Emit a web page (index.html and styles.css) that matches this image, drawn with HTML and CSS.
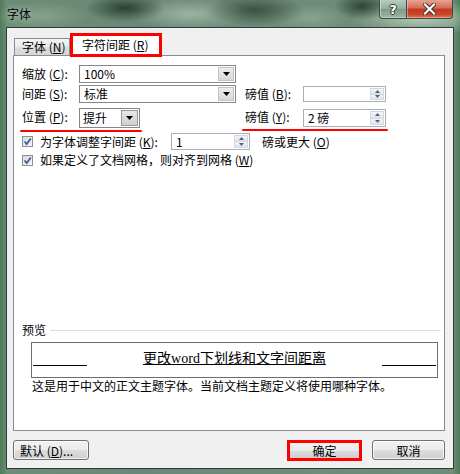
FILE: index.html
```html
<!DOCTYPE html>
<html lang="zh-CN">
<head>
<meta charset="utf-8">
<title>字体</title>
<link rel="stylesheet" href="styles.css">
</head>
<body>
<div class="window">
  <div class="titlebar">
    <span class="title">字体</span>
    <div class="caption">
      <div class="cbtn help"><span class="qmark">?</span></div>
      <div class="cbtn close">
        <svg width="13" height="12" viewBox="0 0 13 12">
          <path d="M2 1.5 L11 10.5 M11 1.5 L2 10.5" stroke="#3a2a26" stroke-width="4" stroke-linecap="square" fill="none"/>
          <path d="M2 1.5 L11 10.5 M11 1.5 L2 10.5" stroke="#ffffff" stroke-width="2.2" stroke-linecap="square" fill="none"/>
        </svg>
      </div>
    </div>
  </div>
  <div class="client">
    <div class="tabs">
      <div class="tab">字体 (<u>N</u>)</div>
      <div class="tab active">字符间距 (<u>R</u>)</div>
    </div>
    <div class="panel">
      <div class="form">
        <div class="lbl">缩放 (<u>C</u>):</div>
        <div class="combo"><span class="val">100%</span><span class="drop"><svg width="7" height="4" viewBox="0 0 7 4"><path d="M0 0H7L3.5 4Z" fill="#000"/></svg></span></div>
        <div></div><div></div><div></div>

        <div class="lbl">间距 (<u>S</u>):</div>
        <div class="combo"><span class="val">标准</span><span class="drop"><svg width="7" height="4" viewBox="0 0 7 4"><path d="M0 0H7L3.5 4Z" fill="#000"/></svg></span></div>
        <div></div>
        <div class="lbl">磅值 (<u>B</u>):</div>
        <div class="spin short"><span class="val"></span><span class="arrows"><span class="up"><svg width="5" height="3" viewBox="0 0 5 3"><path d="M0 3H5L2.5 0Z" fill="#4d6386"/></svg></span><span class="dn"><svg width="5" height="3" viewBox="0 0 5 3"><path d="M0 0H5L2.5 3Z" fill="#4d6386"/></svg></span></span></div>

        <div class="lbl">位置 (<u>P</u>):</div>
        <div class="combo pos"><span class="val">提升</span><span class="drop big"><svg width="7" height="4" viewBox="0 0 7 4"><path d="M0 0H7L3.5 4Z" fill="#000"/></svg></span></div>
        <div></div>
        <div class="lbl">磅值 (<u>Y</u>):</div>
        <div class="spin"><span class="val">2 磅</span><span class="arrows"><span class="up"><svg width="5" height="3" viewBox="0 0 5 3"><path d="M0 3H5L2.5 0Z" fill="#4d6386"/></svg></span><span class="dn"><svg width="5" height="3" viewBox="0 0 5 3"><path d="M0 0H5L2.5 3Z" fill="#4d6386"/></svg></span></span></div>

        <span class="mark mark-left"></span>
        <span class="mark mark-right"></span>
      </div>

      <div class="check-row kern">
        <span class="cb"><svg width="9" height="9" viewBox="0 0 9 9"><path d="M1.5 4.5 L3.7 7 L7.8 1.5" stroke="#3f5d9c" stroke-width="1.8" fill="none"/></svg></span>
        <span class="cb-text kern-text">为字体调整字间距 (<u>K</u>):</span>
        <div class="spin kern-spin"><span class="val">1</span><span class="arrows"><span class="up"><svg width="5" height="3" viewBox="0 0 5 3"><path d="M0 3H5L2.5 0Z" fill="#4d6386"/></svg></span><span class="dn"><svg width="5" height="3" viewBox="0 0 5 3"><path d="M0 0H5L2.5 3Z" fill="#4d6386"/></svg></span></span></div>
        <span class="after">磅或更大 (<u>O</u>)</span>
      </div>

      <div class="check-row grid-row">
        <span class="cb"><svg width="9" height="9" viewBox="0 0 9 9"><path d="M1.5 4.5 L3.7 7 L7.8 1.5" stroke="#3f5d9c" stroke-width="1.8" fill="none"/></svg></span>
        <span class="cb-text">如果定义了文档网格，则对齐到网格 (<u>W</u>)</span>
      </div>

      <div class="preview">
        <div class="pv-head"><span>预览</span><span class="pv-line"></span></div>
        <div class="pv-box">
          <span class="pv-rule"></span>
          <span class="pv-text">更改<span class="latin">word</span>下划线和文字间距离</span>
          <span class="pv-rule"></span>
        </div>
        <div class="pv-desc">这是用于中文的正文主题字体。当前文档主题定义将使用哪种字体。</div>
      </div>
    </div>
    <div class="buttons">
      <div class="btn default">默认 (<u>D</u>)...</div>
      <div class="btn-group">
        <div class="btn ok">确定</div>
        <div class="btn cancel">取消</div>
      </div>
    </div>
  </div>
</div>
</body>
</html>
```

FILE: styles.css
```css
* { box-sizing: border-box; }
html, body { margin: 0; padding: 0; }
body {
  width: 460px;
  height: 474px;
  overflow: hidden;
  font-family: "Noto Sans CJK SC", "Noto Sans", sans-serif;
  font-size: 12px;
  color: #000;
}
u { text-decoration: underline; text-underline-offset: 1px; }

.window {
  width: 460px;
  height: 474px;
  display: flex;
  flex-direction: column;
  padding: 0 6px 5px 6px;
  background:
    radial-gradient(ellipse 40px 14px at 125px 8px, rgba(28,52,40,.85), rgba(28,52,40,0)),
    radial-gradient(ellipse 50px 16px at 255px 10px, rgba(35,60,45,.7), rgba(35,60,45,0)),
    radial-gradient(ellipse 28px 14px at 362px 6px, rgba(30,50,40,.8), rgba(30,50,40,0)),
    radial-gradient(ellipse 60px 16px at 190px 14px, rgba(170,195,178,.75), rgba(170,195,178,0)),
    radial-gradient(ellipse 70px 18px at 420px 18px, rgba(195,212,198,.85), rgba(195,212,198,0)),
    radial-gradient(ellipse 50px 14px at 40px 16px, rgba(150,175,160,.6), rgba(150,175,160,0)),
    radial-gradient(ellipse 40px 14px at 310px 18px, rgba(150,178,160,.6), rgba(150,178,160,0)),
    linear-gradient(90deg, #4d7a58 0px, #6b8e75 7px, #6c8777 30%, #6f8b79 70%, #6b8e75 453px, #4d7a58 460px);
}

.titlebar {
  height: 27px;
  display: flex;
  justify-content: space-between;
  align-items: flex-start;
  padding: 0 1px;
}
.title {
  line-height: 27px;
  text-shadow: 0 0 5px rgba(255,255,255,.55);
}
.caption { display: flex; }
.cbtn {
  height: 19px;
  display: flex;
  align-items: center;
  justify-content: center;
  border: 1px solid #3b4a42;
  border-top: none;
}
.help {
  width: 27px;
  border-right: none;
  border-bottom-left-radius: 4px;
  background: linear-gradient(#b9cbbf, #93ad9c 50%, #7d9988 51%, #9fb8a6);
  box-shadow: inset 1px 0 rgba(255,255,255,.45), inset 0 -1px rgba(255,255,255,.35);
}
.qmark {
  color: #fff;
  font-family: "DejaVu Sans", sans-serif;
  font-weight: bold;
  font-size: 13px;
  line-height: 13px;
  text-shadow: 0 0 1px #2d3a33, 1px 0 0 #2d3a33, -1px 0 0 #2d3a33, 0 1px 0 #2d3a33, 0 -1px 0 #2d3a33;
}
.close {
  width: 47px;
  border-bottom-right-radius: 4px;
  background: linear-gradient(#e8a493, #d26a55 45%, #c2391f 50%, #c9472b 80%, #de7a57);
  box-shadow: inset 1px 0 rgba(255,255,255,.35), inset 0 -1px rgba(255,255,255,.3);
}

.client {
  flex: 1;
  border: 1px solid #2f3d36;
  background: #f0f0f0;
  display: flex;
  flex-direction: column;
  padding-top: 5px;
}

.tabs {
  height: 22px;
  display: flex;
  align-items: flex-end;
  padding-left: 7px;
}
.tab {
  height: 17px;
  width: 56px;
  border: 1px solid #898c95;
  border-bottom: none;
  background: linear-gradient(#f4f4f4, #e9e9e9 50%, #dcdcdc 51%, #d6d6d6);
  padding-left: 7px;
  line-height: 16px;
  white-space: nowrap;
}
.tab.active {
  position: relative;
  z-index: 2;
  width: 92px;
  height: 24px;
  margin-bottom: -2px;
  border: 3px solid #ff0000;
  background: #fff;
  padding-left: 9px;
  line-height: 18px;
}

.panel {
  margin-left: 6px;
  width: 432px;
  height: 376px;
  border: 1px solid #898c95;
  background: #fff;
  padding: 9px 0 37px 8px;
  display: flex;
  flex-direction: column;
}

.form {
  position: relative;
  display: grid;
  grid-template-columns: 57px 157px 9px 58px 83px;
  grid-template-rows: 18px 21px 20px;
  row-gap: 2px;
  align-items: start;
}
.lbl { line-height: 18px; white-space: nowrap; }

.combo {
  height: 18px;
  display: flex;
  border: 1px solid #828790;
  background: #fff;
}
.combo .val { flex: 1; padding-left: 4px; line-height: 16px; }
.drop {
  width: 16px;
  margin: 1px;
  border: 1px solid #c4c4c4;
  background: linear-gradient(#ececec, #d8d8d8);
  display: flex;
  align-items: center;
  justify-content: center;
}
.combo.pos { width: 61px; height: 20px; }
.combo.pos .val { line-height: 18px; padding-left: 3px; }
.drop.big {
  width: 17px;
  border-color: #9a9a9a;
  background: linear-gradient(#e6e6e6, #cfcfcf);
}

.spin {
  height: 18px;
  margin-top: 1px;
  display: flex;
  border: 1px solid #abadb3;
  background: #fff;
}
.spin.short { height: 16px; }
.spin .val { flex: 1; padding-left: 4px; line-height: 16px; }
.arrows {
  width: 14px;
  display: flex;
  flex-direction: column;
  margin: 1px;
}
.arrows span {
  flex: 1;
  display: flex;
  align-items: center;
  justify-content: center;
  background: linear-gradient(#f3f5f8, #dfe4ea);
  border: 1px solid #d2d8e0;
}
.arrows .up { border-bottom: none; }

.mark {
  position: absolute;
  height: 2px;
  background: #ff0000;
  border-radius: 1px;
}
.mark-left { left: -2px; top: 65px; width: 122px; }
.mark-right { left: 220px; top: 64px; width: 146px; }

.check-row {
  display: flex;
  align-items: center;
}
.kern { margin-top: 5px; height: 17px; }
.grid-row { margin-top: 3px; height: 14px; }
.cb {
  width: 11px;
  height: 11px;
  border: 1px solid #8e8f8f;
  background: linear-gradient(135deg, #dadbdc, #f6f6f6);
  display: flex;
  align-items: center;
  justify-content: center;
  margin-right: 7px;
}
.cb-text { white-space: nowrap; line-height: 14px; }
.kern-text { width: 131px; }
.kern-spin { width: 79px; height: 17px; margin-top: 0; }
.after { margin-left: 12px; white-space: nowrap; }

.preview { margin-top: auto; }
.pv-head {
  display: flex;
  align-items: center;
  height: 14px;
  line-height: 14px;
  padding-right: 3px;
}
.pv-line {
  flex: 1;
  height: 1px;
  background: #d5dfe5;
  margin-left: 4px;
}
.pv-box {
  margin-top: 5px;
  margin-left: 9px;
  width: 407px;
  height: 36px;
  border: 1px solid #6d6d6d;
  display: flex;
  padding: 0 1px;
}
.pv-rule {
  width: 54px;
  height: 1px;
  background: #000;
  margin-top: 22px;
}
.pv-text {
  flex: 1;
  text-align: center;
  font-size: 14px;
  line-height: 16px;
  margin-top: 6px;
  text-decoration: underline;
  text-underline-offset: 1px;
  white-space: nowrap;
}
.latin { font-family: "Liberation Serif", serif; }
.pv-desc {
  margin-top: 1px;
  margin-left: 10px;
  line-height: 14px;
  white-space: nowrap;
}

.buttons {
  margin-top: 9px;
  display: flex;
  justify-content: space-between;
  align-items: flex-start;
  padding: 0 8px 0 6px;
}
.btn-group { display: flex; gap: 10px; align-items: flex-start; }
.btn {
  height: 20px;
  border: 1px solid #707070;
  border-radius: 3px;
  background: linear-gradient(#f2f2f2, #ebebeb 50%, #dddddd 51%, #cfcfcf);
  box-shadow: inset 0 0 0 1px rgba(255,255,255,.7);
  display: flex;
  align-items: center;
  justify-content: center;
  white-space: nowrap;
}
.btn.default { width: 76px; justify-content: flex-start; padding-left: 6px; }
.btn.ok {
  width: 75px;
  height: 21px;
  border: 3px solid #ff0000;
  border-radius: 0;
  box-shadow: none;
}
.btn.cancel { width: 73px; }
```
